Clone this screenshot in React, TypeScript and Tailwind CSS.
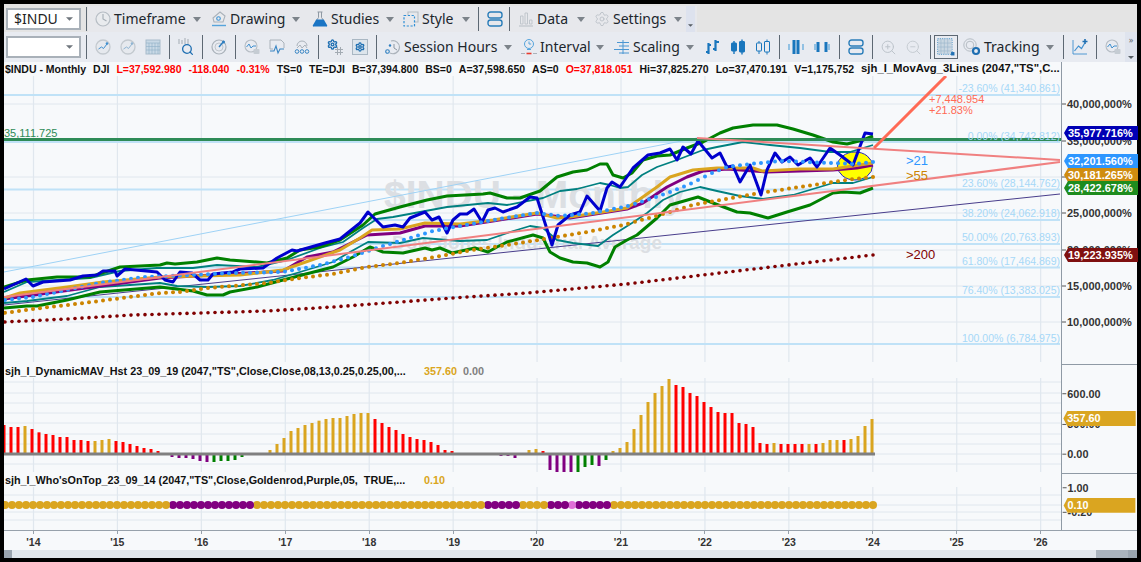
import React from 'react';
import { Search, Settings, ZoomIn, ZoomOut } from 'lucide-react';

// chart series, traced from the picture: "x,y" pairs in page pixels
const parse = (s: string) => s.trim().split(/\s+/).map((p) => p.split(',').map(Number) as [ number, number ]);

const PRICE = parse('4,289 26,279 33,286 43,282 70,280 83,276 97,275 103,271 115,271 117,276 125,269 157,272 165,280 173,282 180,272 192,273 200,280 208,280 213,274 233,272 240,269 263,268 277,258 292,250 297,251 325,243 340,239 360,223 368,212 383,227 395,225 403,227 410,218 425,212 432,220 439,217 447,233 453,220 460,214 467,214 474,209 482,222 488,210 495,208 503,212 517,207 530,197 537,198 552,245 558,225 570,215 580,212 587,196 600,211 607,188 612,182 620,187 633,168 648,155 660,153 670,149 677,160 683,147 691,154 698,141 712,158 720,153 727,167 733,166 740,182 750,165 761,195 767,170 775,153 782,162 790,157 798,165 810,158 817,167 830,148 840,155 853,165 865,133 873,134');
const GREEN_UP = parse('4,287 27,280 57,277 90,277 120,267 160,265 167,263 175,264 197,262 217,258 230,260 257,262 267,263 287,258 300,250 320,247 340,240 363,225 375,214 400,207 427,200 447,196 483,194 490,193 507,198 520,198 540,191 557,177 573,172 587,170 600,164 607,164 613,175 623,178 632,173 643,160 657,156 670,155 687,148 703,142 720,133 733,128 753,125 777,125 793,129 813,135 833,142 847,144 863,140 873,136');
const GREEN_LOW = parse('4,308 27,306 37,306 67,300 100,292 160,287 193,291 207,295 223,295 230,292 257,287 283,280 333,267 353,257 370,247 383,252 403,253 425,248 432,250 440,248 452,253 475,248 488,252 497,247 507,242 533,235 543,238 550,252 560,258 573,262 587,263 600,267 608,262 615,247 627,240 637,235 657,218 670,205 698,197 713,203 737,212 750,213 768,218 787,212 810,205 833,193 843,192 860,193 873,188');
const TEAL_UP = parse('4,292 27,282 90,278 120,271 157,268 193,268 217,265 257,267 287,260 320,248 343,242 363,228 377,219 393,217 447,207 488,203 507,205 543,198 560,191 577,189 600,183 610,185 620,188 628,187 642,175 657,167 677,160 703,150 717,147 743,142 770,145 800,148 830,152 850,152 873,145');
const TEAL_LOW = parse('4,303 27,301 67,296 100,287 160,283 177,286 207,287 240,286 273,280 300,272 333,262 350,252 368,242 400,243 423,238 460,241 487,240 510,232 530,226 543,228 557,240 573,243 598,246 613,235 632,223 647,213 663,200 680,192 700,187 717,191 740,196 763,199 793,195 833,183 853,183 873,177');
const GOLD = parse('4,298 20,293 67,287 103,282 160,277 200,276 240,275 283,270 340,250 360,238 372,230 400,229 425,223 460,224 493,220 537,213 557,218 570,217 603,212 627,208 640,199 657,187 670,177 693,170 717,168 753,168 762,171 800,169 833,169 853,166 873,163');
const PURPLE = parse('4,299 160,278 283,271 307,257 333,252 367,235 400,233 425,226 460,226 493,221 537,214 570,218 627,209 643,203 667,187 687,177 703,171 727,169 767,172 833,170 857,168 873,165');
const BLUE_DOTS = parse('4,300 33,297 67,290 100,283 143,277 170,276 233,273 283,272 320,265 350,257 383,246 410,238 433,231 460,226 493,220 537,213 560,216 593,213 628,206 650,199 670,192 690,184 712,173 727,167 750,164 780,161 833,163 853,164 873,162');
const ORANGE_DOTS = parse('4,313 33,309 67,305 107,300 160,293 180,292 207,288 233,286 267,283 300,278 333,274 367,267 400,263 440,256 473,250 520,243 550,238 587,232 623,225 660,215 693,205 720,200 760,193 793,188 833,182 853,179 873,177');
const RED_DOTS = parse('4,322 67,319 133,315 200,313 267,311 333,307 453,298 527,293 627,284 720,273 873,255');

const toPoints = (pts: Array<[ number, number ]>) => pts.map((p) => p.join(',')).join(' ');

const yAt = (pts: Array<[ number, number ]>, x: number) => {
  for (let i = 1; i < pts.length; i++) {
    if (x <= pts[i][0]) {
      const [ x0, y0 ] = pts[i - 1];
      const [ x1, y1 ] = pts[i];
      return y0 + (y1 - y0) * (x - x0) / (x1 - x0);
    }
  }
  return pts[pts.length - 1][1];
};

const MONTHS = Array.from({ length: 126 }, (_, i) => 873 - 7 * i).filter((x) => x >= 4);

// r red, g goldenrod, p purple, n green; height in thirds of a pixel
const HIST = 'r87 r81 r81 g84 r75 r65 r60 r57 r51 r51 r42 r42 r39 g39 g42 g45 r39 r36 r30 r24 r18 r15 r9 r3 p-9 p-12 p-12 p-15 p-21 p-24 n-24 n-21 n-21 n-18 n-9 n-3 g3 g3 g12 g30 g48 g69 g78 g87 g93 g100 g105 g108 g108 g114 g120 g123 g123 r105 r93 r81 r72 r60 r51 r45 r42 r36 r27 r12 r9 r3 r3 r3 g3 p-3 p-3 p-6 p-6 p-12 g3 g12 g15 r9 p-48 p-54 p-54 p-54 n-54 n-39 n-33 p-36 n-18 g9 g18 g36 g75 g117 g156 g183 g204 g225 r207 r201 r183 r174 r156 r141 r126 r123 r123 r93 r90 r81 r33 r30 g33 r30 r30 r30 r30 g30 r30 g33 g42 g42 r42 g45 g54 g84 g105'.split(' ');
const HIST_COLORS: Record<string, string> = { r: '#ff0000', g: '#daa520', p: '#800080', n: '#008000' };

const whoColor = (x: number) => {
  if (x === 572) return '#e070d8';
  if ((x > 170 && x < 253) || (x > 486 && x < 519) || (x > 548 && x < 570) || (x > 574 && x < 610)) return '#800080';
  return '#daa520';
};

const YEARS = [ '\'14', '\'15', '\'16', '\'17', '\'18', '\'19', '\'20', '\'21', '\'22', '\'23', '\'24', '\'25', '\'26' ];
const GRID_X = YEARS.map((_, i) => 33.5 + 83.93 * i);

const FIBS = [
  { y: 95, ty: 92, label: '-23.60% (41,340.861)' },
  { y: 142, ty: 140, label: '0.00% (34,742.812)' },
  { y: 189.5, ty: 187, label: '23.60% (28,144.762)' },
  { y: 220, ty: 217, label: '38.20% (24,062.918)' },
  { y: 244, ty: 241, label: '50.00% (20,763.893)' },
  { y: 267.5, ty: 265, label: '61.80% (17,464.869)' },
  { y: 297, ty: 294, label: '76.40% (13,383.025)' },
  { y: 344, ty: 342, label: '100.00% (6,784.975)' },
];

const TAGS = [
  { y: 133, fill: '#0000b4', label: '35,977.716%' },
  { y: 161, fill: '#2d96ff', label: '32,201.560%' },
  { y: 175, fill: '#cf8c10', label: '30,181.265%' },
  { y: 188, fill: '#1e8c1e', label: '28,422.678%' },
  { y: 255, fill: '#7f1010', label: '19,223.935%' },
];

const AXIS_FONT = 'Liberation Sans, Arial, sans-serif';

const Caret = () => (
  <svg viewBox="0 0 8 5" className="w-[8px] h-[5px] shrink-0"><path d="M0 0h8L4 5z" fill="#7c838a"/></svg>
);

const Sep = ({ className = 'ml-[4px] mr-[3px]' }: { className?: string }) => (
  <span className={ `w-px h-[24px] bg-[#5d6873] shrink-0 ${ className }` }/>
);

const Ic = ({ children }: { children: React.ReactNode }) => (
  <svg viewBox="0 0 16 16" fill="none" className="w-[16px] h-[16px] shrink-0">{ children }</svg>
);

const ClockIcon = () => (
  <Ic><circle cx="8" cy="8" r="7" stroke="#b6bdc4" fill="#e9ebee" strokeWidth="1.2"/><path d="M8 3v5l3.5 2" stroke="#a5adb5" strokeWidth="1.1"/></Ic>
);
const DrawingIcon = () => (
  <Ic>
    <path d="M9 1l5 4-2 6H3L2 7z" stroke="#aab2ba" strokeWidth="1.1" fill="#e9ebee"/>
    <circle cx="7.5" cy="7.5" r="1.8" stroke="#3c92d4" strokeWidth="1.1"/>
    <path d="M1 14.5h14" stroke="#56a4dc" strokeWidth="1.4"/>
  </Ic>
);
const FlaskIcon = () => (
  <Ic>
    <path d="M5.5 1h5M6.5 1v5.5L4 10M9.5 1v5.5L12 10" stroke="#8f99a3" strokeWidth="1"/>
    <path d="M4.3 8.5h7.4L15 14a1 1 0 0 1-1 1.6H2A1 1 0 0 1 1 14z" fill="#1b75c4"/>
  </Ic>
);
const StyleIcon = () => (
  <Ic>
    <path d="M5 4V1h10v10h-3" stroke="#b6bdc4" strokeWidth="1.1"/>
    <rect x="1" y="4.5" width="10.5" height="10.5" stroke="#2f8fd6" strokeWidth="1.2" strokeDasharray="2.2 1.6"/>
  </Ic>
);
const StackIcon = () => (
  <Ic>
    <rect x="1" y="1" width="14" height="6" rx="2.6" stroke="#2a7db9" strokeWidth="1.4"/>
    <rect x="1" y="9" width="14" height="6" rx="2.6" stroke="#2a7db9" strokeWidth="1.4"/>
  </Ic>
);
const DataIcon = () => (
  <Ic>
    <path d="M1 15h14" stroke="#b6bdc4"/>
    <path d="M2.5 5h2.5v8H2.5zM7 2h2.5v11H7zM11.5 9H14v4h-2.5z" stroke="#bcc3ca" strokeWidth="0.9"/>
  </Ic>
);
const GearIcon = () => <Settings size={ 16 } strokeWidth={ 1.2 } color="#b6bdc4" className="shrink-0"/>;

const ChartCircle = ({ tone = '#3f8fcf' }: { tone?: string }) => (
  <Ic>
    <circle cx="8" cy="8" r="7" stroke="#c3c9cf" fill="#e6e9ee" strokeWidth="1.3"/>
    <path d="M3.5 10l3-2 2 1.5 3.5-4.5" stroke={ tone } strokeWidth="1"/>
    <circle cx="12" cy="4.5" r="1.3" fill={ tone }/>
  </Ic>
);
const CalendarIcon = () => (
  <Ic>
    <rect x="1" y="1" width="14" height="14" stroke="#a7bccb" fill="#c9d9e6"/>
    <path d="M1 4h14M4 4v11M7 4v11M10 4v11M13 4v11M1 7.5h14M1 11h14" stroke="#8fb0c8" strokeWidth="0.6"/>
  </Ic>
);
const ScanIcon = () => (
  <span className="relative w-[16px] h-[18px] shrink-0">
    <svg viewBox="0 0 16 6" className="absolute top-0 left-0 w-[16px] h-[6px]"><path d="M1 1v5M4 2v4M7 0v6M10 1v5" stroke="#a3abb3" strokeWidth="1"/></svg>
    <Search size={ 13 } strokeWidth={ 2.4 } color="#1f6fb2" className="absolute bottom-0 right-0"/>
  </span>
);
const RadarIcon = () => (
  <Ic>
    <circle cx="8" cy="8" r="7" stroke="#aab2ba" strokeWidth="1.2"/>
    <circle cx="8" cy="8" r="4" stroke="#c0c6cc"/>
    <path d="M8 8l5-6" stroke="#2f7fc0" strokeWidth="1.4"/>
    <circle cx="12.5" cy="3" r="1.5" fill="#2f7fc0"/>
  </Ic>
);
const BubbleIcon = () => (
  <Ic>
    <circle cx="7" cy="7" r="6" stroke="#b6bdc4" strokeWidth="1.1"/>
    <path d="M2.5 8l2.5-3 2 4 2-2h3" stroke="#3f8fcf"/>
    <rect x="9.5" y="10" width="6" height="5" rx="1" fill="#c5ccd3"/>
  </Ic>
);
const PanelIcon = () => (
  <Ic>
    <path d="M1 1h11l3 3v5M1 1v9h3" stroke="#aab2ba"/>
    <path d="M1 12h4l2-5 2 7 2-4h4" stroke="#3a86c4" strokeWidth="1.1"/>
  </Ic>
);
const NodesIcon = () => (
  <Ic>
    <path d="M3 7a5 5 0 0 1 10 0" stroke="#aab2ba"/>
    <path d="M3 9l3-3 2 3 3-3 2 3" stroke="#aab2ba"/>
    <circle cx="3" cy="12.5" r="1.8" stroke="#3a86c4"/>
    <circle cx="8" cy="12.5" r="1.8" stroke="#3a86c4"/>
    <circle cx="13" cy="12.5" r="1.8" stroke="#3a86c4"/>
  </Ic>
);
const GearHashIcon = () => (
  <span className="relative w-[16px] h-[16px] shrink-0">
    <Settings size={ 11 } strokeWidth={ 3 } color="#1f6fb2" className="absolute top-0 left-0"/>
    <svg viewBox="0 0 8 8" className="absolute bottom-0 right-0 w-[8px] h-[8px]"><path d="M2.5 0v8M5.5 0v8M0 2.5h8M0 5.5h8" stroke="#a3abb3"/></svg>
  </span>
);
const GearBoxIcon = () => (
  <span className="w-[16px] h-[16px] shrink-0 border border-[#a9b7c3] bg-[#dde5ec] flex items-center justify-center">
    <Settings size={ 10 } strokeWidth={ 3.2 } color="#1f6fb2"/>
  </span>
);
const SessionIcon = () => (
  <Ic>
    <path d="M6 2a6.5 6.5 0 1 1-1 12" stroke="#aab2ba" strokeWidth="1.2"/>
    <path d="M9 5v4l3 2" stroke="#8d97a1"/>
    <circle cx="2.5" cy="12.5" r="1.8" stroke="#2f7fc0" strokeWidth="1.1"/>
    <circle cx="5" cy="6.5" r="1.2" fill="#2f7fc0"/>
  </Ic>
);
const IntervalIcon = () => (
  <Ic>
    <circle cx="8" cy="5" r="4.5" stroke="#56a4dc"/>
    <path d="M8 2.5V5h2.2M6 10.5h4" stroke="#56a4dc"/>
    <path d="M0 14.5h4M12 14.5h4" stroke="#aab2ba"/>
    <path d="M5.5 14.5h5" stroke="#e83b2e" strokeWidth="1.6"/>
  </Ic>
);
const ScalingIcon = () => (
  <Ic>
    <path d="M9 1v14M3 3.5h12M5 7h10M0 10.5h15M5 14h10" stroke="#4a96d2" strokeWidth="1"/>
  </Ic>
);
const OhlcIcon = () => (
  <Ic>
    <path d="M3.5 4v11M10.5 1v11M1 13h2.5M3.5 6H6M8 10h2.5M10.5 3H14" stroke="#1976bd" strokeWidth="2.2"/>
  </Ic>
);
const CandleIcon = ({ hollow }: { hollow?: boolean }) => (
  <Ic>
    <path d="M4 2v13M12 0.5v15" stroke="#1976bd" strokeWidth={ hollow ? 1 : 1.4 }/>
    <rect x="1.5" y="4" width="5" height="8" rx="0.5" fill={ hollow ? '#e8ebf1' : '#1976bd' } stroke="#1976bd"/>
    <rect x="9.5" y="2.5" width="5" height="10.5" rx="0.5" fill={ hollow ? '#e8ebf1' : '#1976bd' } stroke="#1976bd"/>
  </Ic>
);
const WideCandleIcon = ({ spread }: { spread?: boolean }) => (
  <Ic>
    <path d="M1 5v6M15 5v6" stroke="#6eb0de" strokeWidth="1.4"/>
    { spread ?
      <path d="M4 3v10M12 3v10" stroke="#1976bd" strokeWidth="3"/> :
      <path d="M6 1v14M10 1v14" stroke="#1976bd" strokeWidth="3"/> }
  </Ic>
);
const TrackingIcon = () => (
  <svg viewBox="0 0 18 18" fill="none" className="w-[18px] h-[18px] shrink-0">
    <circle cx="7" cy="7" r="6.2" stroke="#b6bdc4"/>
    <circle cx="7" cy="7" r="3.8" stroke="#b6bdc4"/>
    <circle cx="13" cy="13" r="3" stroke="#1f6fb2" strokeWidth="2.2"/>
  </svg>
);
const GridBoxIcon = () => (
  <svg viewBox="0 0 16 16" className="w-[18px] h-[18px]">
    <rect x="0.5" y="0.5" width="13" height="14" fill="#cad7e2" stroke="#6ea6d0" strokeDasharray="1 1"/>
    <path d="M3.5 1v13M6.5 1v13M9.5 1v13M1 4.5h12M1 8h12M1 11.5h12" stroke="#9db8cc" strokeWidth="0.6"/>
    <rect x="12.5" y="12.5" width="3" height="3" fill="#1f6fb2"/>
  </svg>
);
const NewChartIcon = () => (
  <Ic>
    <path d="M1 1v14h14" stroke="#3f8fcf" strokeWidth="0.9"/>
    <path d="M2.5 12l4-5 3 2.5 3-5" stroke="#3f8fcf" strokeWidth="1.2"/>
    <path d="M13 0v5M10.5 2.5h5" stroke="#1f6fb2" strokeWidth="1.6"/>
  </Ic>
);

const Combo = ({ value }: { value?: string }) => (
  <div className="w-[75px] h-[22px] shrink-0 ml-[2px] border-2 border-[#a9b1b9] bg-white flex items-center pl-[6px] pr-[6px] justify-between">
    <span className="text-[14px] leading-none text-[#222]">{ value }</span>
    <svg viewBox="0 0 8 4" className="w-[7px] h-[4px]"><path d="M0 0h8L4 4z" fill="#6f767d"/></svg>
  </div>
);

const Menu = ({ icon, label, className }: { icon: React.ReactNode; label: string; className: string }) => (
  <div className={ `flex items-center justify-between shrink-0 pl-[3px] ${ className }` }>
    <span className="flex items-center gap-[3px]">
      { icon }
      <span className="text-[14px] leading-none whitespace-nowrap text-[#20262c]">{ label }</span>
    </span>
    <Caret/>
  </div>
);

const Btn = ({ children, className = 'w-[25px]' }: { children: React.ReactNode; className?: string }) => (
  <div className={ `flex items-center justify-center shrink-0 ${ className }` }>{ children }</div>
);

const TopBar = () => (
  <div className="h-[28px] flex items-end shrink-0">
    <div className="h-[26px] flex items-center">
      <Combo value="$INDU"/>
      <Sep className="ml-[5px] mr-px"/>
      <div className="h-[26px] w-[609px] bg-[#e7e8ec] flex items-center pl-[4px]">
        <Menu icon={ <ClockIcon/> } label="Timeframe" className="w-[116px] pr-[7px]"/>
        <Menu icon={ <DrawingIcon/> } label="Drawing" className="w-[101px] pr-[9px]"/>
        <Menu icon={ <FlaskIcon/> } label="Studies" className="w-[91px] pr-[6px]"/>
        <Menu icon={ <StyleIcon/> } label="Style" className="w-[75px] pr-[5px]"/>
        <Sep className="ml-[3px] mr-[3px]"/>
        <Btn className="w-[25px]"><StackIcon/></Btn>
        <Sep className="ml-[2px] mr-[5px]"/>
        <Menu icon={ <DataIcon/> } label="Data" className="w-[76px] pr-[6px]"/>
        <Menu icon={ <GearIcon/> } label="Settings" className="w-[95px] pr-[4px]"/>
        <div className="w-[9px] h-[26px] bg-[#dde2ee] flex items-end justify-center pb-[5px]">
          <svg viewBox="0 0 6 3" className="w-[5px] h-[3px]"><path d="M0 0h6L3 3z" fill="#555c63"/></svg>
        </div>
      </div>
    </div>
  </div>
);

const SecondBar = () => (
  <div className="h-[30px] flex items-center shrink-0 bg-[#e8ebf1]">
    <Combo/>
    <Sep className="ml-[5px] mr-[3px]"/>
    <Btn><ChartCircle/></Btn>
    <Btn><ChartCircle tone="#8fb4d2"/></Btn>
    <Btn><CalendarIcon/></Btn>
    <Sep/>
    <Btn><ScanIcon/></Btn>
    <Sep/>
    <Btn><RadarIcon/></Btn>
    <Sep/>
    <Btn><BubbleIcon/></Btn>
    <Btn><PanelIcon/></Btn>
    <Btn><NodesIcon/></Btn>
    <Sep/>
    <Btn><GearHashIcon/></Btn>
    <Btn><GearBoxIcon/></Btn>
    <Sep/>
    <Menu icon={ <SessionIcon/> } label="Session Hours" className="w-[137px] pr-[5px] pl-[5px]"/>
    <Menu icon={ <IntervalIcon/> } label="Interval" className="w-[93px] pr-[6px] pl-[4px]"/>
    <Menu icon={ <ScalingIcon/> } label="Scaling" className="w-[90px] pr-[6px] pl-[4px]"/>
    <Btn><OhlcIcon/></Btn>
    <Btn><CandleIcon/></Btn>
    <Btn><CandleIcon hollow/></Btn>
    <Sep/>
    <Btn className="w-[26px]"><WideCandleIcon/></Btn>
    <Btn className="w-[26px]"><WideCandleIcon spread/></Btn>
    <Sep/>
    <Btn><StackIcon/></Btn>
    <Sep/>
    <Btn><ZoomIn size={ 17 } strokeWidth={ 1.4 } color="#bcc3ca"/></Btn>
    <Btn><ZoomOut size={ 17 } strokeWidth={ 1.4 } color="#c5cbd1"/></Btn>
    <Sep/>
    <div className="w-[24px] h-[24px] shrink-0 border border-[#5d6873] flex items-center justify-center"><GridBoxIcon/></div>
    <Menu icon={ <TrackingIcon/> } label="Tracking" className="w-[101px] pr-[5px] pl-[5px]"/>
    <Sep/>
    <Btn><NewChartIcon/></Btn>
    <Sep/>
    <Btn><BubbleIcon/></Btn>
    <div className="w-[12px] h-[30px] shrink-0 bg-[#dfe4ee] flex flex-col items-center justify-between py-[3px] text-[9px] leading-none text-[#666d74]">
      <span>»</span>
      <svg viewBox="0 0 6 3" className="w-[6px] h-[3px]"><path d="M0 0h6L3 3z" fill="#555c63"/></svg>
    </div>
  </div>
);

const Legend = ({ children, className = 'text-[10.8px] gap-[6px]' }: { children: React.ReactNode; className?: string }) => (
  <div className={ `h-[14px] pl-px flex items-center whitespace-pre overflow-hidden leading-none font-bold font-['Liberation_Sans',Arial,sans-serif] text-[#111] ${ className }` }>
    { children }
  </div>
);

const Grid = ({ top, bottom, rows }: { top: number; bottom: number; rows: Array<number> }) => (
  <g stroke="#e0e7ee" strokeWidth="1">
    { rows.map((y) => <line key={ y } x1={ 4 } x2={ 1061 } y1={ y } y2={ y }/>) }
    { GRID_X.map((x) => <line key={ x } x1={ x } x2={ x } y1={ top } y2={ bottom } strokeWidth="1.2"/>) }
  </g>
);

const Line = ({ pts, color, width }: { pts: Array<[ number, number ]>; color: string; width: number }) => (
  <polyline points={ toPoints(pts) } fill="none" stroke={ color } strokeWidth={ width } strokeLinejoin="round"/>
);

const Dots = ({ pts, color, r = 2 }: { pts: Array<[ number, number ]>; color: string; r?: number }) => (
  <g fill={ color }>
    { MONTHS.map((x) => <circle key={ x } cx={ x } cy={ yAt(pts, x) } r={ r }/>) }
  </g>
);

const Tag = ({ y, h = 14, fill, label, x = 1063, w = 74 }: { y: number; h?: number; fill: string; label: string; x?: number; w?: number }) => (
  <g>
    <polygon
      points={ `${ x },${ y } ${ x + 4 },${ y - h / 2 } ${ x + w },${ y - h / 2 } ${ x + w },${ y + h / 2 } ${ x + 4 },${ y + h / 2 }` }
      fill={ fill }
    />
    <text x={ x + 4 } y={ y + 4 } fontSize="11" fontWeight="700" fill="#fff" fontFamily={ AXIS_FONT }>{ label }</text>
  </g>
);

const AxisLabel = ({ y, label }: { y: number; label: string }) => (
  <g>
    <line x1={ 1061 } x2={ 1065 } y1={ y } y2={ y } stroke="#555"/>
    <text x={ 1066 } y={ y + 4 } fontSize="11" fontWeight="700" fill="#333" fontFamily={ AXIS_FONT }>{ label }</text>
  </g>
);

const MainPlot = () => (
  <svg viewBox="4 76 1057 288" className="w-[1057px] h-[288px] block">
    <Grid top={ 76 } bottom={ 362 } rows={ [ 104, 141, 177, 213, 250, 286, 322 ] }/>
    <g stroke="#c0e2f7" strokeWidth="2">
      { FIBS.map((f) => <line key={ f.y } x1={ 4 } x2={ 1060 } y1={ f.y } y2={ f.y }/>) }
    </g>
    <g fill="#dcdfe3" fontFamily={ AXIS_FONT } fontWeight="700">
      <text x={ 384 } y={ 208 } fontSize="39">$INDU - Monthly</text>
      <text x={ 392 } y={ 249 } fontSize="19">Dow Jones Industrial Average</text>
    </g>
    <ellipse cx={ 855 } cy={ 166 } rx={ 17.5 } ry={ 14 } fill="#ffff00" stroke="#2222cc"/>
    <line x1={ 4 } y1={ 272 } x2={ 697 } y2={ 138 } stroke="#9ed2f5" strokeWidth="1"/>
    <line x1={ 4 } y1={ 305 } x2={ 1060 } y2={ 194 } stroke="#483d8b" strokeWidth="1"/>
    <Line pts={ TEAL_UP } color="#008080" width={ 1.8 }/>
    <Line pts={ TEAL_LOW } color="#008080" width={ 1.8 }/>
    <Line pts={ GREEN_UP } color="#008000" width={ 3 }/>
    <Line pts={ GREEN_LOW } color="#008000" width={ 3 }/>
    <Line pts={ PURPLE } color="#800080" width={ 3 }/>
    <Line pts={ GOLD } color="#daa520" width={ 3 }/>
    <Dots pts={ ORANGE_DOTS } color="#cc8400"/>
    <Line pts={ PRICE } color="#0000cd" width={ 3 }/>
    <Dots pts={ BLUE_DOTS } color="#2d96ff"/>
    <Dots pts={ RED_DOTS } color="#800000" r={ 1.8 }/>
    <line x1={ 4 } y1={ 139.5 } x2={ 1061 } y2={ 139.5 } stroke="#2e8b57" strokeWidth="3"/>
    <line x1={ 4 } y1={ 297 } x2={ 1060 } y2={ 162 } stroke="#f08080" strokeWidth="2"/>
    <line x1={ 697 } y1={ 138 } x2={ 1060 } y2={ 160 } stroke="#f08080" strokeWidth="2"/>
    <line x1={ 874 } y1={ 148 } x2={ 946 } y2={ 76 } stroke="#ff6a55" strokeWidth="3"/>
    <text x={ 4 } y={ 137 } fontSize="11" fill="#2e8b57" fontFamily={ AXIS_FONT }>35,111.725</text>
    <g fontSize="10.5" fill="#a6d8f8" fontFamily={ AXIS_FONT } textAnchor="end">
      { FIBS.map((f) => <text key={ f.y } x={ 1060 } y={ f.ty }>{ f.label }</text>) }
    </g>
    <g fontSize="11" fill="#ff6a55" fontFamily={ AXIS_FONT }>
      <text x={ 929 } y={ 103 }>+7,448.954</text>
      <text x={ 929 } y={ 114 }>+21.83%</text>
    </g>
    <g fontSize="13" fontFamily={ AXIS_FONT }>
      <text x={ 906 } y={ 165 } fill="#2d96ff">&gt;21</text>
      <text x={ 906 } y={ 180 } fill="#cc8400">&gt;55</text>
      <text x={ 906 } y={ 259 } fill="#800000">&gt;200</text>
    </g>
  </svg>
);

const MainAxis = () => (
  <svg viewBox="1061 62 76 302" className="w-[76px] h-[302px] block">
    { [ [ 104, '40,000,000%' ], [ 141, '35,000,000%' ], [ 177, '30,000,000%' ], [ 213, '25,000,000%' ], [ 250, '20,000,000%' ], [ 286, '15,000,000%' ], [ 322, '10,000,000%' ] ]
      .map(([ y, label ]) => <AxisLabel key={ y } y={ y as number } label={ label as string }/>) }
    { TAGS.map((t) => <Tag key={ t.y } { ...t }/>) }
  </svg>
);

const HistPlot = () => (
  <svg viewBox="4 378 1057 95" className="w-[1057px] h-[95px] block">
    <Grid top={ 378 } bottom={ 472 } rows={ [ 382, 393, 403, 413, 423, 434, 444, 454, 464 ] }/>
    { HIST.map((v, i) => {
      const h = Number(v.slice(1)) / 3;
      const x = 872 - 7 * (HIST.length - 1 - i);
      return <rect key={ i } x={ x - 1.5 } width={ 3 } y={ h > 0 ? 454 - h : 454 } height={ Math.abs(h) } fill={ HIST_COLORS[v[0]] }/>;
    }) }
    <line x1={ 4 } x2={ 875 } y1={ 454 } y2={ 454 } stroke="#808080" strokeWidth="3"/>
  </svg>
);

const HistAxis = () => (
  <svg viewBox="1061 364 76 109" className="w-[76px] h-[108px] block">
    <AxisLabel y={ 393 } label="600.00"/>
    <AxisLabel y={ 424 } label="300.00"/>
    <AxisLabel y={ 454 } label="0.00"/>
    <Tag y={ 418 } h={ 15 } x={ 1062 } w={ 73 } fill="#daa520" label="357.60"/>
  </svg>
);

const WhoPlot = () => (
  <svg viewBox="4 487 1057 43" className="w-[1057px] h-[43px] block">
    <Grid top={ 487 } bottom={ 530 } rows={ [ 495, 505, 512, 520 ] }/>
    { MONTHS.map((x) => <circle key={ x } cx={ x } cy={ 505 } r={ 4 } fill={ whoColor(x === 572 + 1 ? 572 : x) }/>) }
  </svg>
);

const WhoAxis = () => (
  <svg viewBox="1061 473 76 57" className="w-[76px] h-[56px] block">
    <AxisLabel y={ 487 } label="1.00"/>
    <AxisLabel y={ 512 } label="-0.20"/>
    <Tag y={ 505 } h={ 15 } x={ 1062 } w={ 73 } fill="#daa520" label="0.10"/>
  </svg>
);

const TimeAxis = () => (
  <div className="h-[20px] shrink-0 border-t border-[#97a1ab] flex overflow-hidden">
    <div className="flex -ml-[12.5px]">
      { YEARS.map((y) => (
        <div key={ y } className="w-[83.93px] shrink-0 flex flex-col items-center">
          <span className="w-px h-[3px] bg-[#97a1ab]"/>
          <span className="mt-[3px] text-[10.5px] leading-none font-bold text-[#333] font-['Liberation_Sans',Arial,sans-serif]">{ y }</span>
        </div>
      )) }
    </div>
  </div>
);

const Scrollbar = () => (
  <div className="h-[8px] shrink-0 bg-[#e0e6ec] flex justify-between">
    <span className="w-[8px] bg-[#9aa5b0]"/>
    <span className="w-[41px] bg-[#aab4be] flex justify-end"><span className="w-[9px] bg-[#9aa5b0]"/></span>
  </div>
);

const App = () => (
  <div className="w-[1141px] h-[562px] bg-black pt-[4px] px-[4px] pb-[4px] overflow-hidden font-['Noto_Sans',sans-serif]">
    <div className="h-[554px] flex flex-col bg-[#f7f9fb]">
      <div className="bg-[#e4e4e4]">
        <TopBar/>
        <SecondBar/>
      </div>

      <div className="flex h-[302px] shrink-0">
        <div className="w-[1057px]">
          <Legend className="text-[10.5px] gap-[7px]">
            <span>$INDU - Monthly</span>
            <span>DJI</span>
            <span className="text-[#ff0000]">L=37,592.980</span>
            <span className="text-[#ff0000]">-118.040</span>
            <span className="text-[#ff0000]">-0.31%</span>
            <span>TS=0</span>
            <span>TE=DJI</span>
            <span>B=37,394.800</span>
            <span>BS=0</span>
            <span>A=37,598.650</span>
            <span>AS=0</span>
            <span className="text-[#ff0000]">O=37,818.051</span>
            <span>Hi=37,825.270</span>
            <span>Lo=37,470.191</span>
            <span>V=1,175,752</span>
            <span className="text-[11.3px]">sjh_I_MovAvg_3Lines (2047,"TS",C...</span>
          </Legend>
          <MainPlot/>
        </div>
        <div className="w-[76px] border-l border-[#8f9aa5]"><MainAxis/></div>
      </div>

      <div className="flex h-[109px] shrink-0">
        <div className="w-[1057px]">
          <Legend>
            <span className="w-[413px] shrink-0">sjh_I_DynamicMAV_Hst 23_09_19 (2047,"TS",Close,Close,08,13,0.25,0.25,00,...</span>
            <span className="text-[#daa520]">357.60</span>
            <span className="text-[#808080]">0.00</span>
          </Legend>
          <HistPlot/>
        </div>
        <div className="w-[76px] border-l border-t border-[#8f9aa5]"><HistAxis/></div>
      </div>

      <div className="flex h-[57px] shrink-0">
        <div className="w-[1057px]">
          <Legend>
            <span className="w-[413px] shrink-0">sjh_I_Who'sOnTop_23_09_14 (2047,"TS",Close,Goldenrod,Purple,05,  TRUE,...</span>
            <span className="text-[#daa520]">0.10</span>
          </Legend>
          <WhoPlot/>
        </div>
        <div className="w-[76px] border-l border-t border-[#8f9aa5]"><WhoAxis/></div>
      </div>

      <TimeAxis/>
      <Scrollbar/>
    </div>
  </div>
);

export default App;
